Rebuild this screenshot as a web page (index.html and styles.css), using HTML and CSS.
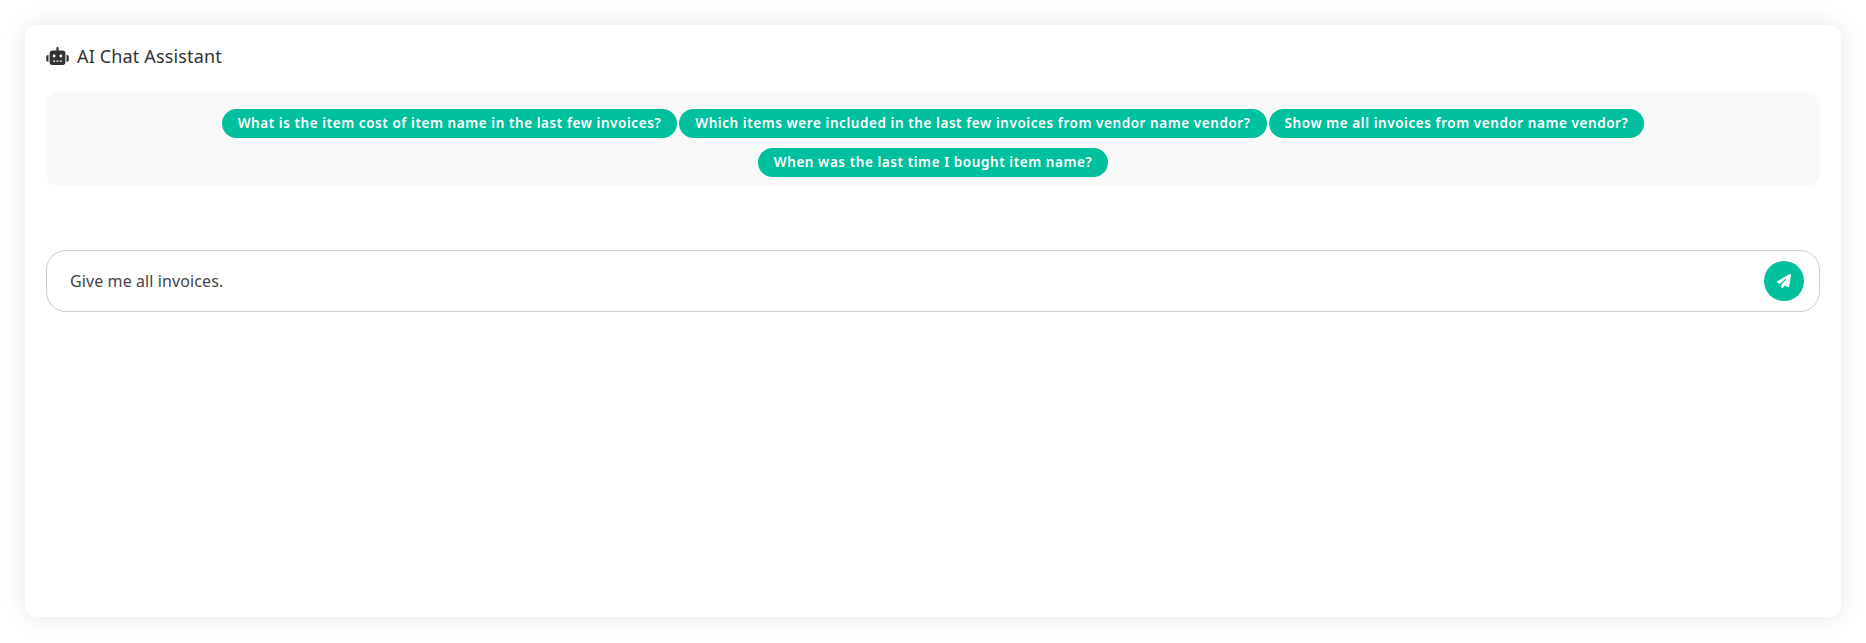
FILE: index.html
```html
<!DOCTYPE html>
<html lang="en">
<head>
  <meta charset="UTF-8" />
  <title>AI Chat Assistant</title>
  <link rel="stylesheet" href="styles.css">
</head>
<body>
  <div class="chat-card">
    <div class="chat-title">
      <svg class="robot-icon" viewBox="0 0 640 512" width="23" height="18" aria-hidden="true">
        <path d="M320 0c17.700 0 32 14.300 32 32v64h120c39.800 0 72 32.200 72 72v272c0 39.800-32.200 72-72 72H168c-39.800 0-72-32.200-72-72V168c0-39.800 32.200-72 72-72h120V32c0-17.700 14.300-32 32-32zM208 384c-8.800 0-16 7.200-16 16s7.200 16 16 16h32c8.800 0 16-7.200 16-16s-7.200-16-16-16h-32zm96 0c-8.800 0-16 7.200-16 16s7.200 16 16 16h32c8.800 0 16-7.200 16-16s-7.200-16-16-16h-32zm96 0c-8.800 0-16 7.200-16 16s7.200 16 16 16h32c8.800 0 16-7.200 16-16s-7.200-16-16-16h-32zM264 256a40 40 0 1 0-80 0 40 40 0 1 0 80 0zm152 40a40 40 0 1 0 0-80 40 40 0 1 0 0 80zM48 224h16v192H48c-26.500 0-48-21.500-48-48v-96c0-26.500 21.500-48 48-48zm544 0c26.500 0 48 21.500 48 48v96c0 26.500-21.500 48-48 48h-16V224h16z"/>
      </svg>
      <span>AI Chat Assistant</span>
    </div>

    <div class="suggestions">
      <button class="chip">What is the item cost of item name in the last few invoices?</button>
      <button class="chip">Which items were included in the last few invoices from vendor name vendor?</button>
      <button class="chip">Show me all invoices from vendor name vendor?</button>
      <button class="chip">When was the last time I bought item name?</button>
    </div>

    <div class="chat-input">
      <span class="chat-text">Give me all invoices.</span>
      <button class="send-btn" aria-label="Send">
        <svg viewBox="0 0 512 512" width="14" height="14" aria-hidden="true">
          <path d="M498 6.300c10.100 7 15.400 19.100 13.500 31.200l-64 416c-1.500 9.700-7.400 18.200-16 23s-18.900 5.400-28 1.600L284 427.700l-68.500 74.100c-8.900 9.700-22.900 12.900-35.200 8.100S160 493.200 160 480v-83.600c0-4 1.500-7.800 4.200-10.800l167.600-182.900c5.800-6.300 5.600-16-.4-22s-15.700-6.400-22-.7L106 360.800 17.700 316.600C7.100 311.300.3 300.700 0 288.900s5.900-22.800 16.100-28.700l448-256c10.700-6.100 23.900-5.500 34 1.400z"/>
        </svg>
      </button>
    </div>
  </div>
</body>
</html>
```

FILE: styles.css
```css
body {
  font-family: 'Noto Sans', sans-serif;
  margin: 0;
  padding: 25px;
  height: 643px;
  box-sizing: border-box;
  background: #fff;
  color: #333;
  overflow: hidden;
}

.chat-card {
  height: 592px;
  box-sizing: border-box;
  padding: 19px 21px;
  background: #fff;
  border-radius: 12px;
  box-shadow: 0 0 24px rgba(0, 0, 0, 0.1);
}

.chat-title {
  display: flex;
  align-items: center;
  gap: 8px;
  height: 24px;
  margin-bottom: 24px;
  font-size: 18px;
  line-height: 24px;
  letter-spacing: 0.15px;
  color: #333;
}
.robot-icon {
  fill: #333;
  flex: none;
}

.suggestions {
  display: flex;
  flex-wrap: wrap;
  justify-content: center;
  gap: 10px 2px;
  padding: 17px 40px 9px;
  background: #f9f9f9;
  border-radius: 12px;
  margin-bottom: 64px;
}
.chip {
  font-family: inherit;
  font-size: 13.5px;
  font-weight: 600;
  line-height: 18px;
  letter-spacing: 0.57px;
  height: 29px;
  padding: 0 16px 2px;
  color: #fff;
  background: #00c09d;
  border: none;
  border-radius: 15px;
  white-space: nowrap;
}

.chat-input {
  display: flex;
  align-items: center;
  justify-content: space-between;
  height: 62px;
  box-sizing: border-box;
  padding: 0 15px 0 23px;
  border: 1px solid #ccc;
  border-radius: 20px;
}
.chat-text {
  font-size: 16px;
  letter-spacing: 0.1px;
  color: #444;
}
.send-btn {
  display: flex;
  align-items: center;
  justify-content: center;
  width: 40px;
  height: 40px;
  padding: 0;
  background: #00c09d;
  border: none;
  border-radius: 50%;
}
.send-btn svg {
  fill: #fff;
}
```
